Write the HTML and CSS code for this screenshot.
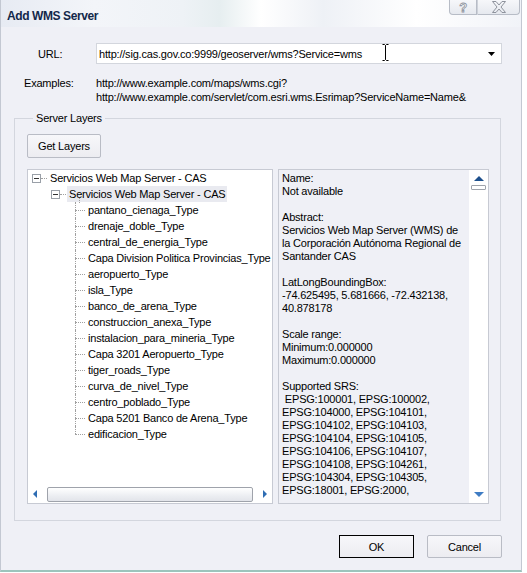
FILE: index.html
```html
<!DOCTYPE html>
<html>
<head>
<meta charset="utf-8">
<link rel="stylesheet" href="styles.css">
</head>
<body>
<div class="window">
  <div class="titlebar">
    <span class="title">Add WMS Server</span>
    <div class="caption-btns">
      <span class="cbtn help"><span class="q">?</span></span>
      <span class="cbtn close">
        <svg width="16" height="12" viewBox="0 0 16 12"><path d="M1.5 0.5 H5 L8 4 L11 0.5 H14.5 L10 6 L14.5 11.5 H11 L8 8 L5 11.5 H1.5 L6 6 Z" fill="none" stroke="#8e939d" stroke-width="1"/></svg>
      </span>
    </div>
  </div>
  <div class="body">
    <div class="url-row">
      <span class="lbl url-lbl">URL:</span>
      <div class="combo">
        <span class="combo-text">http://sig.cas.gov.co:9999/geoserver/wms?Service=wms</span>
        <span class="combo-btn"><svg width="7" height="4" viewBox="0 0 7 4"><path d="M0 0H7L3.5 4Z" fill="#000"/></svg></span>
        <svg class="ibeam" width="7" height="17" viewBox="0 0 7 17"><path d="M0.5 0.5H2.5L3.5 1.5L4.5 0.5H6.5M3.5 1.5V15.5M0.5 16.5H2.5L3.5 15.5L4.5 16.5H6.5" fill="none" stroke="#000" stroke-width="1"/></svg>
      </div>
    </div>
    <div class="examples">
      <span class="lbl">Examples:</span>
      <div class="ex-text">
        <div>http://www.example.com/maps/wms.cgi?</div>
        <div>http://www.example.com/servlet/com.esri.wms.Esrimap?ServiceName=Name&amp;</div>
      </div>
    </div>
    <fieldset class="group">
      <legend>Server Layers</legend>
      <button class="btn get">Get Layers</button>
      <div class="panes">
        <div class="tree">
          <div class="tree-items">
            <div class="node lvl1">
              <svg class="mbox" width="9" height="9" viewBox="0 0 9 9"><rect x="0.5" y="0.5" width="8" height="8" fill="#fff" stroke="#9aa0a8"/><path d="M2 4.5H7" stroke="#333"/></svg>
              <span class="hconn short"></span>
              <span class="txt">Servicios Web Map Server - CAS</span>
            </div>
            <div class="node lvl2">
              <svg class="mbox" width="9" height="9" viewBox="0 0 9 9"><rect x="0.5" y="0.5" width="8" height="8" fill="#fff" stroke="#9aa0a8"/><path d="M2 4.5H7" stroke="#333"/></svg>
              <span class="hconn short"></span>
              <span class="txt sel">Servicios Web Map Server - CAS</span>
            </div>
            <div class="leaves">
              <div class="leaf"><span class="txt">pantano_cienaga_Type</span></div>
              <div class="leaf"><span class="txt">drenaje_doble_Type</span></div>
              <div class="leaf"><span class="txt">central_de_energia_Type</span></div>
              <div class="leaf"><span class="txt">Capa Division Politica Provincias_Type</span></div>
              <div class="leaf"><span class="txt">aeropuerto_Type</span></div>
              <div class="leaf"><span class="txt">isla_Type</span></div>
              <div class="leaf"><span class="txt">banco_de_arena_Type</span></div>
              <div class="leaf"><span class="txt">construccion_anexa_Type</span></div>
              <div class="leaf"><span class="txt">instalacion_para_mineria_Type</span></div>
              <div class="leaf"><span class="txt">Capa 3201 Aeropuerto_Type</span></div>
              <div class="leaf"><span class="txt">tiger_roads_Type</span></div>
              <div class="leaf"><span class="txt">curva_de_nivel_Type</span></div>
              <div class="leaf"><span class="txt">centro_poblado_Type</span></div>
              <div class="leaf"><span class="txt">Capa 5201 Banco de Arena_Type</span></div>
              <div class="leaf last"><span class="txt">edificacion_Type</span></div>
            </div>
          </div>
          <div class="hscroll">
            <span class="arrow left"><svg width="4" height="8" viewBox="0 0 4 8"><path d="M4 0V8L0 4Z" fill="#2f6db3"/></svg></span>
            <span class="hthumb"></span>
            <span class="arrow right"><svg width="4" height="8" viewBox="0 0 4 8"><path d="M0 0V8L4 4Z" fill="#2f6db3"/></svg></span>
          </div>
        </div>
        <div class="info">
          <div class="info-text">
            <div>Name:</div>
            <div>Not available</div>
            <div class="gap"></div>
            <div>Abstract:</div>
            <div>Servicios Web Map Server (WMS) de</div>
            <div>la Corporación Autónoma Regional de</div>
            <div>Santander CAS</div>
            <div class="gap"></div>
            <div>LatLongBoundingBox:</div>
            <div>-74.625495, 5.681666, -72.432138,</div>
            <div>40.878178</div>
            <div class="gap"></div>
            <div>Scale range:</div>
            <div>Minimum:0.000000</div>
            <div>Maximum:0.000000</div>
            <div class="gap"></div>
            <div>Supported SRS:</div>
            <div>&nbsp;EPSG:100001, EPSG:100002,</div>
            <div>EPSG:104000, EPSG:104101,</div>
            <div>EPSG:104102, EPSG:104103,</div>
            <div>EPSG:104104, EPSG:104105,</div>
            <div>EPSG:104106, EPSG:104107,</div>
            <div>EPSG:104108, EPSG:104261,</div>
            <div>EPSG:104304, EPSG:104305,</div>
            <div>EPSG:18001, EPSG:2000,</div>
          </div>
          <div class="vscroll">
            <svg class="up" width="10" height="5" viewBox="0 0 10 5"><path d="M0 5H10L5 0Z" fill="#1c4f8c"/></svg>
            <span class="vthumb"></span>
            <span class="vspace"></span>
            <svg class="down" width="10" height="5" viewBox="0 0 10 5"><path d="M0 0H10L5 5Z" fill="#3f7cc4"/></svg>
          </div>
        </div>
      </div>
    </fieldset>
    <div class="footer">
      <button class="btn ok">OK</button>
      <button class="btn">Cancel</button>
    </div>
  </div>
</div>
</body>
</html>
```
FILE: styles.css
```css
* { box-sizing: border-box; }
html, body {
  margin: 0;
  padding: 0;
  background: #ffffff;
}
body {
  width: 527px;
  height: 573px;
  font-family: "Liberation Sans", Arial, sans-serif;
  font-size: 11px;
  letter-spacing: -0.2px;
  color: #000;
}
.window {
  width: 522px;
  height: 572px;
  background: #eff0f6;
  border-left: 1px solid #c3c8d2;
  border-right: 1px solid #c3c8d2;
  border-bottom: 2px solid #9cc4bc;
  display: flex;
  flex-direction: column;
}
.titlebar {
  height: 27px;
  flex: none;
  display: flex;
  align-items: flex-start;
  justify-content: space-between;
  background: linear-gradient(90deg, #e7ebf3 0%, #f3f5f9 18%, #eef2f6 35%, #e6eef0 42%, #ffffff 50%, #eef1f6 62%, #ffffff 80%, #f1f3f8 100%);
}
.title {
  font-weight: bold;
  font-size: 12px;
  letter-spacing: -0.4px;
  color: #13284a;
  margin: 9px 0 0 6px;
}
.caption-btns {
  display: flex;
  margin-right: 1px;
}
.cbtn {
  height: 15px;
  display: flex;
  align-items: center;
  justify-content: center;
  border: 1px solid #b7bcc6;
  border-top: none;
  background: linear-gradient(#f6f7fa, #e6e9ef);
}
.cbtn.help {
  width: 28px;
  border-radius: 0 0 0 4px;
}
.cbtn.close {
  width: 43px;
  border-left: 1px solid #cdd1d9;
  border-radius: 0 0 4px 0;
}
.q {
  font-size: 13px;
  font-weight: bold;
  color: #fbfbfd;
  -webkit-text-stroke: 0.8px #8e939d;
  line-height: 13px;
}
.body {
  flex: 1;
  padding: 16px 19px 0 13px;
  display: flex;
  flex-direction: column;
}
.url-row {
  display: flex;
  align-items: center;
  height: 21px;
}
.lbl {
  width: 82px;
  padding-left: 10px;
  flex: none;
}
.url-lbl {
  padding-left: 24px;
}
.combo {
  position: relative;
  width: 407px;
  height: 21px;
  background: #fff;
  border: 1px solid #d3d6dd;
  display: flex;
  align-items: center;
}
.combo-text {
  flex: 1;
  padding-left: 2px;
  white-space: nowrap;
}
.combo-btn {
  width: 17px;
  height: 17px;
  margin-right: 1px;
  display: flex;
  align-items: center;
  justify-content: center;
}
.ibeam {
  position: absolute;
  left: 285px;
  top: 0px;
}
.examples {
  display: flex;
  margin-top: 12px;
  line-height: 14px;
}
.ex-text {
  white-space: nowrap;
}
.group {
  margin: 8px 0 0 0;
  width: 487px;
  height: 409px;
  border: 1px solid #d3d6de;
  padding: 9px 11px 0 12px;
  display: flex;
  flex-direction: column;
  align-items: flex-start;
}
.group legend {
  padding: 0 3px;
  margin-left: 6px;
  line-height: 13px;
}
.btn {
  font-family: inherit;
  font-size: 11px;
  letter-spacing: -0.2px;
  color: #000;
  height: 23px;
  width: 75px;
  padding: 0;
  border: 1px solid #b9bcc5;
  border-radius: 2px;
  background: linear-gradient(#f7f7fa, #ececf1);
}
.btn.get {
  width: 74px;
  height: 24px;
  flex: none;
}
.panes {
  display: flex;
  gap: 5px;
  margin-top: 11px;
  height: 335px;
  flex: none;
}
.tree {
  width: 246px;
  height: 335px;
  background: #fff;
  border: 1px solid #c7cad3;
  display: flex;
  flex-direction: column;
}
.tree-items {
  flex: 1;
  padding: 0 0 0 4px;
}
.node, .leaf {
  height: 16px;
  display: flex;
  align-items: center;
  white-space: nowrap;
}
.lvl2 {
  padding-left: 19px;
  position: relative;
}
.lvl2::after {
  content: "";
  position: absolute;
  left: 47px;
  top: 12px;
  height: 5px;
  border-left: 1px dotted #a0a0a0;
}
.mbox {
  flex: none;
}
.hconn {
  width: 6px;
  margin: 0 1px 0 0;
  border-top: 1px dotted #a0a0a0;
}
.txt {
  padding: 0 2px;
  line-height: 16px;
}
.txt.sel {
  background: #e9eaf0;
}
.leaves {
  margin-left: 43px;
}
.leaf {
  position: relative;
  padding-left: 11px;
}
.leaf::before {
  content: "";
  position: absolute;
  left: 0;
  top: 0;
  height: 16px;
  border-left: 1px dotted #a0a0a0;
}
.leaf.last::before {
  height: 8px;
}
.leaf::after {
  content: "";
  position: absolute;
  left: 0;
  top: 8px;
  width: 10px;
  border-top: 1px dotted #a0a0a0;
}
.hscroll {
  height: 16px;
  margin-bottom: 1px;
  display: flex;
  align-items: center;
  padding: 0 5px 0 5px;
}
.arrow {
  display: flex;
  align-items: center;
  flex: none;
}
.arrow.left { width: 14px; }
.arrow.right { width: 5px; justify-content: flex-end; }
.hthumb {
  flex: 1;
  height: 15px;
  border: 1px solid #9fa3ab;
  border-radius: 2px;
  background: linear-gradient(#ffffff, #eceef2 60%, #e2e4ea);
  margin: 0 9px 0 0;
}
.info {
  width: 211px;
  height: 335px;
  border: 1px solid #c7cad3;
  display: flex;
  background: #eff0f6;
}
.info-text {
  flex: 1;
  padding: 2px 0 0 3px;
  line-height: 13px;
  white-space: nowrap;
  overflow: hidden;
}
.gap { height: 13px; }
.vscroll {
  width: 19px;
  background: #fff;
  display: flex;
  flex-direction: column;
  align-items: center;
  padding: 6px 0 6px 0;
}
.vthumb {
  width: 15px;
  height: 5px;
  margin-top: 4px;
  border: 1px solid #9fa3ab;
  border-radius: 1px;
  background: #fff;
}
.vspace { flex: 1; }
.footer {
  display: flex;
  justify-content: flex-end;
  gap: 13px;
  margin-top: 14px;
}
.btn.ok {
  border: 1px solid #000;
  border-radius: 0;
}
```
